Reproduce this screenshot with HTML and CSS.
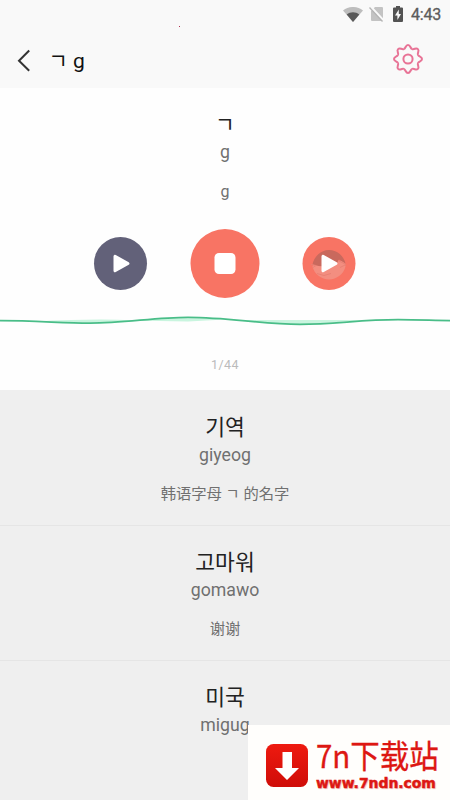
FILE: index.html
```html
<!DOCTYPE html>
<html lang="ko">
<head>
<meta charset="utf-8">
<meta name="viewport" content="width=device-width, initial-scale=1">
<title>ㄱ g</title>
<link rel="stylesheet" href="styles.css">
</head>
<body>
<div class="screen">
  <div class="status">
    <span class="speck"></span>
    <svg class="wifi" width="20" height="15" viewBox="0 0 20 15"><path fill="#bdbdbd" d="M0 3.5C6-1.2 14-1.2 20 3.5L10 15z"/><path fill="#595959" d="M3.7 7.6C7.3 4.6 12.700 4.600 16.300 7.600L10 15z"/></svg>
    <svg class="sim" width="15" height="16" viewBox="0 0 15 16"><path fill="#c3c3c3" d="M6 1h7q1 0 1 1v13H3q-1 0-1-1V5z"/><path stroke="#f9f9f9" stroke-width="2.400" d="M1.500.5l13 14"/><path stroke="#b5b5b5" stroke-width="1.300" d="M.5 1.500l13 14"/></svg>
    <svg class="battery" width="10" height="16" viewBox="0 0 10 16"><path fill="#535353" d="M3 0h4v1.500h2q1 0 1 1V15q0 1-1 1H1q-1 0-1-1V2.500q0-1 1-1h2z"/><path fill="#f9f9f9" d="M5.800 3.500L2 9.500h2.400V14L8 8H5.800z"/></svg>
    <span class="clock">4:43</span>
  </div>
  <header class="bar">
    <svg class="back" width="14" height="24" viewBox="0 0 14 24"><path d="M12.200 1.500L2 11.700L12.200 21.800" fill="none" stroke="#333" stroke-width="2"/></svg>
    <h1 class="title">ㄱ g</h1>
    <svg class="gear" width="32" height="32" viewBox="-16 -16 32 32" fill="none" stroke="#e87396" stroke-width="2">
      <defs><path id="lobe" d="M-4.130-9.980C-2-10.900-2.600-14 0-14S2-10.900 4.130-9.980"/></defs>
      <use href="#lobe"/><use href="#lobe" transform="rotate(45)"/><use href="#lobe" transform="rotate(90)"/><use href="#lobe" transform="rotate(135)"/><use href="#lobe" transform="rotate(180)"/><use href="#lobe" transform="rotate(225)"/><use href="#lobe" transform="rotate(270)"/><use href="#lobe" transform="rotate(315)"/>
      <circle r="4.600"/>
    </svg>
  </header>
  <main class="player">
    <div class="entry">
      <p class="word">ㄱ</p>
      <p class="roman">g</p>
      <p class="meaning">g</p>
    </div>
    <div class="controls">
      <svg width="54" height="54" viewBox="-27.500 -26.500 54 54"><circle r="26.500" fill="#626179"/><path d="M-5.500-7.300L7.500 0L-5.500 7.300z" fill="#fff" stroke="#fff" stroke-width="3" stroke-linejoin="round"/></svg>
      <svg width="70" height="70" viewBox="-35 -34.500 70 70"><circle r="34.500" fill="#f87464"/><rect x="-10.500" y="-10.500" width="21" height="21" rx="4.500" fill="#fff"/></svg>
      <svg width="54" height="54" viewBox="-26 -26.500 54 54"><circle r="26.500" fill="#f87464"/><path d="M-16.500 3A17 17 0 0 0 16.500 3L15-3L-15-1z" fill="#f38e80"/><path d="M-16.500 1A17 18.500 0 0 1 16.500 0L10-4L7 1Q-4 5-16.500 1z" fill="#c9695d"/><path d="M-18 1l5 1l-3 2M9-3l8 4l-6 3M-12 10l7 2l7-2" fill="none" stroke="#e98174" stroke-width="1"/><path d="M-6-7.300L7 0L-6 7.300z" fill="#fff" stroke="#fff" stroke-width="3" stroke-linejoin="round"/></svg>
    </div>
    <svg class="wave" width="450" height="20" viewBox="0 310 450 20"><path fill="#c9f5df" d="M35 321.500Q95 318.500 132 320.300Q180 316.500 225 319.500L188 321.500L130 320.500Q95 324 35 321.500M240 320H366Q340 322 305 324Q275 324 240 320"/><path fill="none" stroke="#49bd88" stroke-width="1.800" d="M0 320.700C35 320.700 65 323.200 90 323.100C125 323 155 317.400 188 317.400C230 317.400 260 324.300 300 324.300C335 324.300 360 319.700 398 319.700C420 319.700 435 320.600 450 320.600"/></svg>
    <p class="count">1/44</p>
  </main>
  <section class="list">
    <article class="entry row"><p class="word">기역</p><p class="roman">giyeog</p><p class="meaning">韩语字母 ㄱ 的名字</p></article>
    <article class="entry row"><p class="word">고마워</p><p class="roman">gomawo</p><p class="meaning">谢谢</p></article>
    <article class="entry row"><p class="word">미국</p><p class="roman">migug</p></article>
  </section>
  <aside class="badge">
    <svg width="44" height="44" viewBox="0 0 44 44"><defs><linearGradient id="red" x2="0" y2="1"><stop stop-color="#ee1a10"/><stop offset="1" stop-color="#cf0d08"/></linearGradient></defs><rect x="0" y="1" width="42" height="43" rx="7.500" fill="url(#red)"/><path fill="#fff" d="M16.500 9h9.500v16h7L21 37L9 25h7.500z"/></svg>
    <div class="brand"><span class="name">7n下载站</span><span class="site">www.7ndn.com</span></div>
  </aside>
</div>
</body>
</html>
```
FILE: styles.css
```css
* { box-sizing: border-box; }
body, p, h1 { margin: 0; }
body { font-family: Roboto, "Noto Sans CJK KR", sans-serif; background: #fefefe; }
.screen { position: relative; width: 450px; height: 800px; overflow: hidden; }
.status { display: flex; align-items: center; justify-content: flex-end; height: 28px; padding-right: 9px; background: #f9f9f9; }
.speck { position: absolute; left: 179px; top: 26px; width: 1px; height: 1px; background: #b03050; }
.wifi { margin-right: 6px; }
.sim { margin-right: 9px; }
.battery { margin-right: 8px; }
.clock { width: 30px; font-size: 16px; line-height: 29px; -webkit-text-stroke: .3px #5c5c5c; color: #5c5c5c; letter-spacing: -0.2px; white-space: nowrap; }
.bar { display: flex; align-items: center; height: 60px; padding: 0 26px 0 17px; background: #f9f9f9; }
.back { margin-top: 5px; }
.title { flex: 1; margin-left: 17.500px; font-size: 21px; line-height: 30px; font-weight: 400; color: #111; padding-top: 5px; }
.gear { margin-top: 2px; }
.player { height: 302px; background: #fefefe; }
.entry { text-align: center; padding-top: 22px; }
.word { height: 30px; font-size: 21.500px; line-height: 30px; color: #222; }
.roman { height: 26px; font-size: 17.700px; line-height: 25px; color: #707070; }
.meaning { height: 24px; margin-top: 13px; font-size: 16px; line-height: 26px; color: #707070; font-family: Roboto, "Noto Sans CJK SC", sans-serif; }
.controls { display: flex; align-items: center; justify-content: center; gap: 43px; height: 70px; margin-top: 26px; }
.controls svg { margin-top: -1px; overflow: visible; }
.wave { display: block; margin-top: 11px; }
.count { margin-top: 25px; font-size: 12.500px; line-height: 20px; color: #bbb; text-align: center; letter-spacing: .4px; }
.list { background: #efefef; height: 410px; }
.row { height: 135px; padding-top: 23px; border-bottom: 1px solid #e5e5e5; }
.row:first-child { height: 136px; }
.row + .row { padding-top: 22px; }
.row .meaning { font-size: 15.300px; line-height: 24px; }
.row:last-child { border-bottom: 0; }
.badge { position: absolute; left: 248px; top: 725px; width: 202px; height: 75px; display: flex; align-items: center; padding: 4px 0 0 18px; background: #fffefc; color: #dd1712; }
.brand { display: flex; flex-direction: column; margin-left: 6px; }
.name { height: 36px; margin-top: -3px; font-family: "Noto Sans CJK SC", sans-serif; font-size: 29.500px; line-height: 36px; white-space: nowrap; transform: scaleY(1.07); -webkit-text-stroke: .3px #dd1712; }
.site { margin-top: 3px; font-family: "DejaVu Sans", sans-serif; font-weight: 700; font-size: 13.900px; line-height: 16px; text-shadow: 1px 1px 1px #eebbb5; -webkit-text-stroke: .5px #dd1712; }
```
